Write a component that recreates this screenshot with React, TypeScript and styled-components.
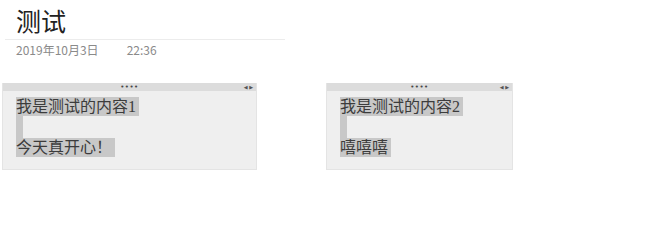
import styled, { createGlobalStyle } from 'styled-components';

const GlobalStyle = createGlobalStyle`
  body {
    margin: 0;
    background: #fff;
    font-family: "Noto Sans CJK SC", "Noto Sans", sans-serif;
  }
`;

type Note = { id: number; lines: string[]; width: number; offset: number };

const notes: Note[] = [
  { id: 1, lines: ['我是测试的内容1', '', '今天真开心！'], width: 255, offset: 2 },
  { id: 2, lines: ['我是测试的内容2', '', '嘻嘻嘻'], width: 187, offset: 69 },
];

const NoteCard = ({ lines, width, offset }: Note) => (
  <Styled.Card $width={width} $offset={offset}>
    <Styled.Handle>
      <Styled.Dots>••••</Styled.Dots>
      <Styled.Arrows>◀ ▶</Styled.Arrows>
    </Styled.Handle>
    <Styled.Body>
      {lines.map((line, i) =>
        line ? <Styled.Line key={i}>{line}</Styled.Line> : <Styled.Blank key={i} />
      )}
    </Styled.Body>
  </Styled.Card>
);

const App = () => {
  return (
    <>
      <GlobalStyle />
      <Styled.Page>
        <Styled.Title>测试</Styled.Title>
        <Styled.Divider />
        <Styled.Meta>
          <span>2019年10月3日</span>
          <span>22:36</span>
        </Styled.Meta>
        <Styled.Notes>
          {notes.map((n) => (
            <NoteCard key={n.id} {...n} />
          ))}
        </Styled.Notes>
      </Styled.Page>
    </>
  );
};

export default App;

const Styled = {
  Page: styled.div`
    display: flex;
    flex-direction: column;
    padding-top: 4px;
  `,
  Title: styled.h1`
    margin: 0 0 0 16px;
    font-size: 25px;
    font-weight: 400;
    line-height: 32px;
    color: #222;
  `,
  Divider: styled.div`
    margin: 3px 0 0 5px;
    width: 280px;
    height: 1px;
    background: #ececec;
  `,
  Meta: styled.div`
    display: flex;
    gap: 28px;
    margin: 1px 0 0 16px;
    font-size: 12px;
    line-height: 18px;
    color: #8a8a8a;
  `,
  Notes: styled.div`
    display: flex;
    align-items: flex-start;
    margin-top: 24px;
  `,
  Card: styled.div<{ $width: number; $offset: number }>`
    width: ${(p) => p.$width}px;
    margin-left: ${(p) => p.$offset}px;
    background: #efefef;
    border: 1px solid #e4e4e4;
    border-top: none;
    box-sizing: border-box;
  `,
  Handle: styled.div`
    position: relative;
    display: flex;
    justify-content: center;
    align-items: center;
    height: 8px;
    background: #dcdcdc;
  `,
  Dots: styled.span`
    font-family: "DejaVu Sans", sans-serif;
    font-size: 7px;
    letter-spacing: 0.5px;
    line-height: 8px;
    color: #444;
  `,
  Arrows: styled.span`
    position: absolute;
    right: 3px;
    top: 0;
    font-family: "DejaVu Sans", sans-serif;
    font-size: 5px;
    line-height: 8px;
    color: #555;
  `,
  Body: styled.div`
    display: flex;
    flex-direction: column;
    align-items: flex-start;
    padding: 6px 0 12px 13px;
  `,
  Line: styled.div`
    background: #c8c8c8;
    font-family: "Liberation Serif", "Noto Sans CJK SC", serif;
    font-size: 16px;
    line-height: 19px;
    color: #3c3c3c;
    padding-right: 3px;
  `,
  Blank: styled.div`
    width: 7px;
    height: 22px;
    background: #c8c8c8;
  `,
};
